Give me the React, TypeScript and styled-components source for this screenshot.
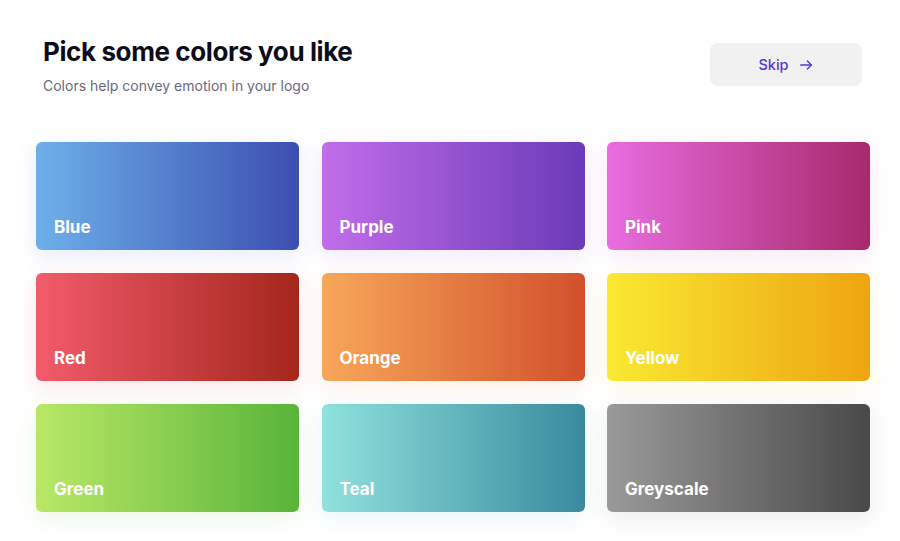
import React from "react";
import styled, { createGlobalStyle } from "styled-components";

const Global = createGlobalStyle`
  html, body { margin: 0; padding: 0; background: #ffffff; }
  body { font-family: Inter, "Noto Sans", sans-serif; -webkit-font-smoothing: antialiased; }
`;

const Page = styled.div`
  width: 900px;
  height: 541px;
  box-sizing: border-box;
  padding: 36px 30px 0 36px;
  overflow: hidden;
`;

const Header = styled.header`
  display: flex;
  justify-content: space-between;
  align-items: flex-start;
  padding: 0 8px 0 7px;
  height: 106px;
`;

const TitleBlock = styled.div`
  display: flex;
  flex-direction: column;
  gap: 9px;
`;

const Title = styled.h1`
  margin: 0;
  font-size: 26px;
  line-height: 32px;
  font-weight: 700;
  color: #0d0d1a;
  letter-spacing: -0.4px;
`;

const Subtitle = styled.p`
  margin: 0;
  font-size: 14px;
  line-height: 18px;
  color: #6a6a7c;
`;

const SkipButton = styled.button`
  margin-top: 7px;
  width: 152px;
  height: 43px;
  border: none;
  border-radius: 8px;
  background: #f1f1f1;
  color: #5a35d6;
  font-family: inherit;
  font-size: 14.5px;
  font-weight: 500;
  display: flex;
  align-items: center;
  justify-content: center;
  gap: 9px;
  cursor: pointer;
`;

const Grid = styled.div`
  display: grid;
  grid-template-columns: 263px 263px 263px;
  justify-content: space-between;
  grid-auto-rows: 108px;
  row-gap: 23px;
`;

const Card = styled.div<{ $from: string; $to: string; $glow: string }>`
  border-radius: 6px;
  background: linear-gradient(90deg, ${(p) => p.$from}, ${(p) => p.$to});
  box-shadow: 0 6px 22px ${(p) => p.$glow};
  display: flex;
  align-items: flex-end;
  padding: 0 18px 13px;
  box-sizing: border-box;
`;

const Label = styled.span`
  color: #ffffff;
  font-size: 17px;
  font-weight: 700;
  line-height: 20px;
`;

const colors = [
  { name: "Blue", from: "#6db0ea", to: "#3c4eb0", glow: "rgba(80,110,210,0.13)" },
  { name: "Purple", from: "#c26de9", to: "#6a3ab8", glow: "rgba(150,80,220,0.13)" },
  { name: "Pink", from: "#e86de0", to: "#a8296b", glow: "rgba(210,80,170,0.13)" },
  { name: "Red", from: "#f25b6b", to: "#a4261c", glow: "rgba(230,80,90,0.14)" },
  { name: "Orange", from: "#f7a75a", to: "#d2502b", glow: "rgba(240,140,80,0.14)" },
  { name: "Yellow", from: "#f9e932", to: "#eea411", glow: "rgba(245,200,60,0.14)" },
  { name: "Green", from: "#bae866", to: "#58b43a", glow: "rgba(120,210,80,0.14)" },
  { name: "Teal", from: "#90e2dd", to: "#398a9e", glow: "rgba(90,200,200,0.14)" },
  { name: "Greyscale", from: "#9a9a9a", to: "#494949", glow: "rgba(100,100,100,0.13)" },
];

function Arrow() {
  return (
    <svg width="16" height="16" viewBox="0 0 24 24" fill="none" stroke="currentColor" strokeWidth="2" strokeLinecap="round" strokeLinejoin="round">
      <path d="M4 12h16" />
      <path d="M14 6l6 6-6 6" />
    </svg>
  );
}

export default function App() {
  return (
    <>
      <Global />
      <Page>
        <Header>
          <TitleBlock>
            <Title>Pick some colors you like</Title>
            <Subtitle>Colors help convey emotion in your logo</Subtitle>
          </TitleBlock>
          <SkipButton>
            Skip <Arrow />
          </SkipButton>
        </Header>
        <Grid>
          {colors.map((c) => (
            <Card key={c.name} $from={c.from} $to={c.to} $glow={c.glow}>
              <Label>{c.name}</Label>
            </Card>
          ))}
        </Grid>
      </Page>
    </>
  );
}
